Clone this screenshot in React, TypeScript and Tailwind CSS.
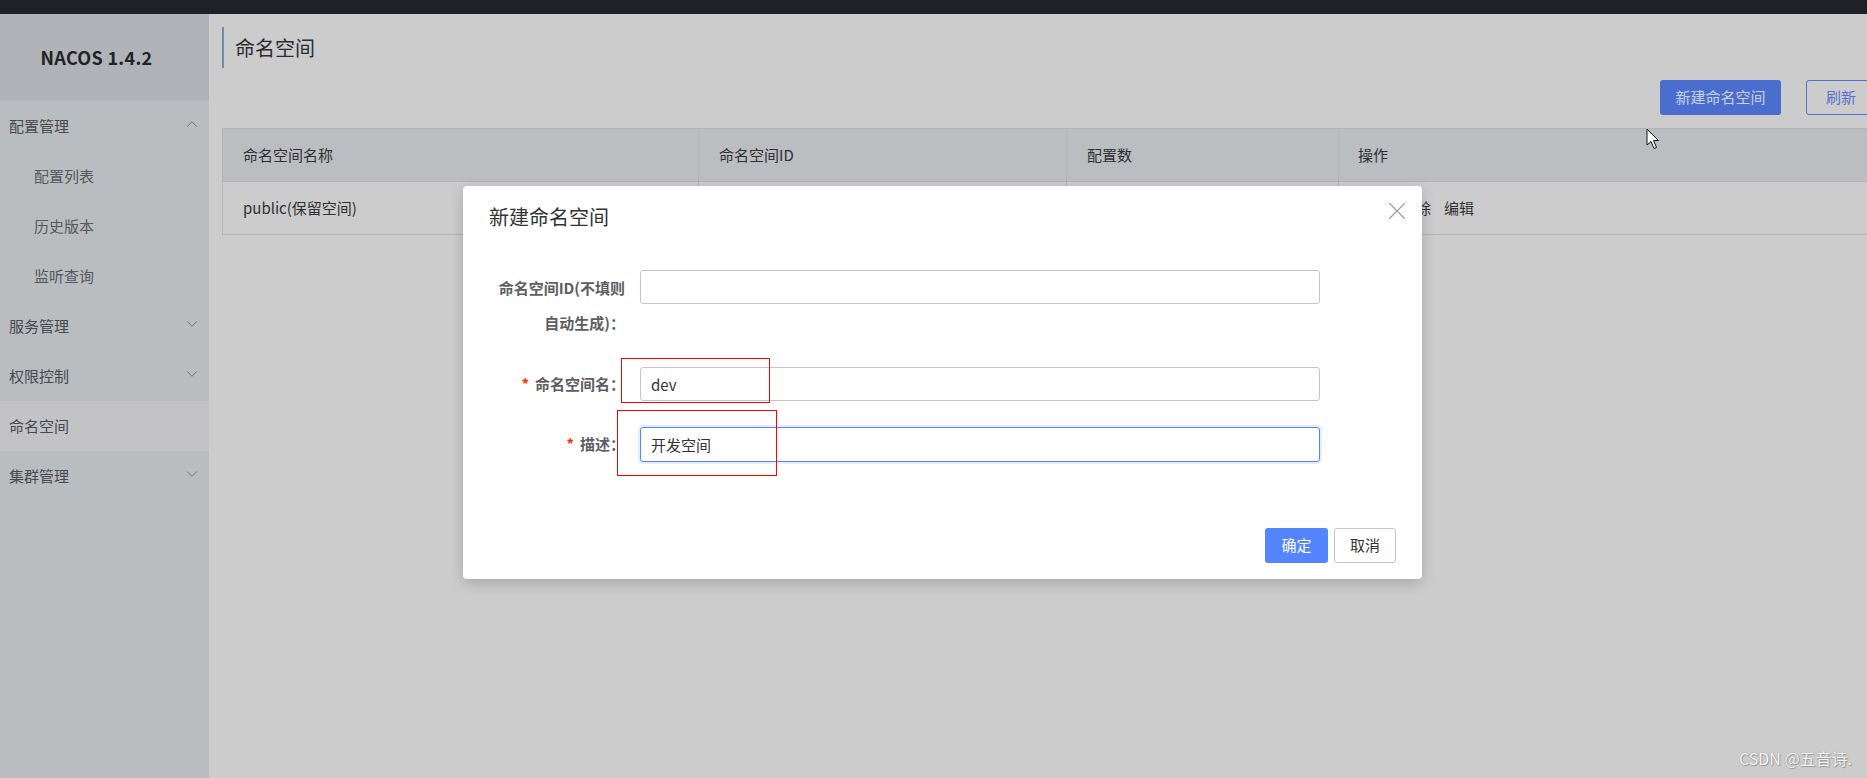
import { X, ChevronUp, ChevronDown } from "lucide-react";

const font = { fontFamily: '"Noto Sans CJK SC", "Noto Sans", sans-serif' };

type MenuItem = { label: string; sub?: boolean; open?: boolean; closed?: boolean; active?: boolean };

const menu: MenuItem[] = [
  { label: "配置管理", open: true },
  { label: "配置列表", sub: true },
  { label: "历史版本", sub: true },
  { label: "监听查询", sub: true },
  { label: "服务管理", closed: true },
  { label: "权限控制", closed: true },
  { label: "命名空间", active: true },
  { label: "集群管理", closed: true },
];

function Sidebar() {
  return (
    <aside className="w-[209px] shrink-0 bg-[#babdc0]">
      <div className="flex h-[87px] items-center justify-center pr-[16px] bg-[#b0b3b7]">
        <span className="text-[18px] font-bold text-[#222326] tracking-[0.3px]">NACOS 1.4.2</span>
      </div>
      <ul>
        {menu.map((m) => (
          <li
            key={m.label}
            className={
              "flex h-[50px] items-center pr-[8px] text-[15px] leading-[20px] " +
              (m.sub ? "pl-[34px] text-[#55585d] " : "pl-[9px] text-[#46494e] ") +
              (m.active ? "bg-[#c3c2c6] text-[#26272b]" : "")
            }
          >
            <span className="flex-1">{m.label}</span>
            {m.open && <ChevronUp size={18} strokeWidth={1.1} className="text-[#5f6268] -mt-[4px]" />}
            {m.closed && <ChevronDown size={18} strokeWidth={1.1} className="text-[#5f6268] -mt-[4px]" />}
          </li>
        ))}
      </ul>
    </aside>
  );
}

function Table() {
  return (
    <div className="mt-[13px] w-[1700px] border border-[#b3b4b7] text-[15px] text-[#2e3035]">
      <div className="flex h-[53px] items-center bg-[#bcbdc1] border-b border-[#b3b4b7]">
        <div className="flex h-full w-[476px] items-center border-r border-[#b3b4b7] pl-[20px]">命名空间名称</div>
        <div className="flex h-full w-[368px] items-center border-r border-[#b3b4b7] pl-[20px]">命名空间ID</div>
        <div className="flex h-full w-[272px] items-center border-r border-[#b3b4b7] pl-[20px]">配置数</div>
        <div className="flex h-full flex-1 items-center pl-[19px]">操作</div>
      </div>
      <div className="flex h-[52px] items-center">
        <div className="flex h-full w-[476px] items-center border-r border-[#b3b4b7] pl-[20px]">public(保留空间)</div>
        <div className="flex h-full w-[368px] items-center border-r border-[#b3b4b7] pl-[20px]">public</div>
        <div className="flex h-full w-[272px] items-center border-r border-[#b3b4b7] pl-[20px]">0</div>
        <div className="flex h-full flex-1 items-center gap-[13px] pl-[19px]">
          <span>详情</span>
          <span>删除</span>
          <span>编辑</span>
        </div>
      </div>
    </div>
  );
}

function Modal() {
  return (
    <div className="absolute left-[463px] top-[186px] z-10 w-[959px] h-[393px] rounded-[4px] bg-white shadow-[0_4px_14px_rgba(0,0,0,0.18)]">
      <div className="relative pl-[26px] pt-[16px]">
        <h3 className="text-[20px] leading-[30px] font-normal text-[#333]">新建命名空间</h3>
        <X size={30} strokeWidth={0.9} className="absolute right-[10px] top-[10px] text-[#9a9a9a]" />
      </div>
      <div className="mt-[38px] pl-[26px] text-[15px]">
        <div className="flex items-start">
          <div className="w-[151px] pr-[15px] text-right font-bold text-[#5c5e63] leading-[35px] whitespace-nowrap">
            命名空间ID(不填则
            <br />
            自动生成)：
          </div>
          <input className="h-[34px] w-[680px] rounded-[3px] border border-[#c4c6cf] px-[10px] outline-none" />
        </div>
        <div className="mt-[27px] flex items-center">
          <div className="w-[151px] pr-[15px] text-right font-bold text-[#5c5e63] whitespace-nowrap">
            <span className="mr-[6px] text-[#ff3000]">*</span>命名空间名：
          </div>
          <input
            defaultValue="dev"
            className="h-[34px] w-[680px] rounded-[3px] border border-[#c4c6cf] px-[10px] text-[15px] text-[#333] outline-none"
          />
        </div>
        <div className="mt-[26px] flex items-center">
          <div className="w-[151px] pr-[15px] text-right font-bold text-[#5c5e63] whitespace-nowrap">
            <span className="mr-[6px] text-[#ff3000]">*</span>描述：
          </div>
          <input
            defaultValue="开发空间"
            className="h-[35px] w-[680px] rounded-[3px] border border-[#5584ff] px-[10px] text-[15px] text-[#333] outline-none shadow-[0_0_0_2px_rgba(85,132,255,0.15)]"
          />
        </div>
      </div>
      <div className="absolute bottom-[16px] right-[26px] flex gap-[6px] text-[15px]">
        <button className="h-[35px] w-[63px] rounded-[3px] bg-[#5584ff] text-white">确定</button>
        <button className="h-[35px] w-[62px] rounded-[3px] border border-[#c4c6cf] bg-white text-[#333]">取消</button>
      </div>
      <div className="pointer-events-none absolute left-[158px] top-[172px] h-[45px] w-[149px] border border-[#ff0000]" />
      <div className="pointer-events-none absolute left-[154px] top-[224px] h-[66px] w-[160px] border border-[#ff0000]" />
    </div>
  );
}

function Cursor() {
  return (
    <svg className="absolute left-[1646px] top-[128px] z-20" width="14" height="23" viewBox="0 0 14 23">
      <path d="M1 1 L1 17 L5 13.5 L8 20.5 L10.5 19.5 L7.5 12.5 L12.5 12.5 Z" fill="#fff" stroke="#111" strokeWidth="1" strokeLinejoin="round" />
    </svg>
  );
}

export default function App() {
  return (
    <div style={font} className="relative h-[778px] w-[1867px] overflow-hidden bg-[#cccccc]">
      <div className="h-[14px] bg-[#1f2127]" />
      <div className="flex h-[764px]">
        <Sidebar />
        <main className="flex-1 overflow-hidden pl-[13px] pt-[13px]">
          <div className="flex h-[41px] items-center border-l-2 border-[#6b8db4] pl-[11px]">
            <h2 className="text-[20px] leading-[28px] font-normal text-[#2b2d31]">命名空间</h2>
          </div>
          <div className="mt-[12px] flex w-[1700px] pl-[1438px] gap-[25px]">
            <button className="h-[35px] w-[121px] rounded-[3px] bg-[#4a6dce] text-[15px] text-[#c9d1ea]">新建命名空间</button>
            <button className="h-[35px] w-[70px] rounded-[3px] border border-[#4f72d2] text-[15px] text-[#5373cf]">刷新</button>
          </div>
          <Table />
        </main>
      </div>
      <Modal />
      <Cursor />
      <div className="absolute bottom-[8px] right-[15px] text-[16px] text-[#f4f4f4] [text-shadow:0_0_1px_#888,1px_1px_1px_#999]">
        CSDN @五音诗.
      </div>
    </div>
  );
}
